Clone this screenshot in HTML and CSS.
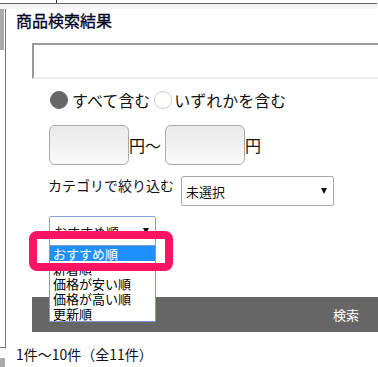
FILE: index.html
```html
<!DOCTYPE html>
<html lang="ja">
<head>
<meta charset="utf-8">
<link rel="stylesheet" href="styles.css">
</head>
<body>
<div class="page">
  <div class="topstrip"><span class="tick"></span></div>
  <div class="topline"></div>
  <div class="band"></div>
  <div class="main">
    <div class="side">
      <div class="side-box"><div class="side-thumb"></div></div>
      <div class="side-block"></div>
    </div>
    <div class="content">
      <h1 class="title">商品検索結果</h1>
      <div class="keyword"></div>
      <div class="radios">
        <span class="radio on"></span><span class="rlabel first">すべて含む</span>
        <span class="radio"></span><span class="rlabel">いずれかを含む</span>
      </div>
      <div class="price">
        <span class="pbox"></span><span class="unit">円〜</span>
        <span class="pbox"></span><span class="unit">円</span>
      </div>
      <div class="category">
        <span class="clabel">カテゴリで絞り込む</span>
        <div class="select cat"><span>未選択</span><i class="arrow"></i></div>
      </div>
      <div class="sortwrap">
        <div class="select sort"><span>おすすめ順</span><i class="arrow"></i></div>
        <ul class="options">
          <li class="hl">おすすめ順</li>
          <li>新着順</li>
          <li>価格が安い順</li>
          <li>価格が高い順</li>
          <li>更新順</li>
        </ul>
        <div class="mark"></div>
      </div>
      <div class="searchbar"><span>検索</span></div>
      <p class="count">1件〜10件（全11件）</p>
    </div>
  </div>
</div>
</body>
</html>
```
FILE: styles.css
```css
html, body {
  margin: 0;
  padding: 0;
  background: #fff;
  overflow: hidden;
}
body {
  width: 378px;
  height: 367px;
  font-family: "Noto Sans CJK JP", "Noto Sans", sans-serif;
  color: #111;
}
.page {
  display: flex;
  flex-direction: column;
}
.topstrip {
  height: 3px;
}
.tick {
  display: block;
  margin-left: 56px;
  width: 1px;
  height: 3px;
  background: #333;
}
.topline {
  width: 377px;
  height: 1px;
  background: #666;
}
.band {
  width: 377px;
  height: 5px;
  background: #f3f3f3;
}
.main {
  display: flex;
}
.side {
  width: 6px;
  flex: none;
  display: flex;
  flex-direction: column;
}
.side-box {
  width: 5px;
  height: 338px;
  border-right: 1px solid #777;
  border-bottom: 1px solid #777;
}
.side-thumb {
  width: 4px;
  height: 41px;
  background: #aaa;
}
.side-block {
  margin-top: 10px;
  width: 5px;
  height: 9px;
  background: #aaa;
}
.content {
  flex: 1;
  min-width: 0;
  padding-left: 10px;
  display: flex;
  flex-direction: column;
}
.title {
  margin: 1px 0 0;
  font-size: 16px;
  line-height: 20px;
  font-weight: normal;
  color: #000026;
  -webkit-text-stroke: 0.3px #000026;
}
.keyword {
  margin: 13px 0 0 16px;
  height: 32px;
  border-top: 2px solid #9a9a9a;
  border-left: 2px solid #9a9a9a;
  border-bottom: 2px solid #ececec;
  flex: none;
}
.radios {
  margin: 11px 0 0 34px;
  display: flex;
  align-items: center;
  height: 20px;
}
.radio {
  width: 18px;
  height: 18px;
  border-radius: 50%;
  box-sizing: border-box;
  border: 1px solid #cfcfcf;
  background: #fff;
}
.radio.on {
  background: #666;
  border-color: #666;
}
.rlabel {
  font-size: 16px;
  line-height: 20px;
  margin-left: 2px;
}
.rlabel.first {
  margin-left: 4px;
  margin-right: 4px;
}
.price {
  margin: 15px 0 0 33px;
  display: flex;
  align-items: center;
}
.pbox {
  width: 80px;
  height: 40px;
  box-sizing: border-box;
  border: 1px solid #aaa;
  border-radius: 6px;
  background: linear-gradient(to bottom, #e9e9e9, #fbfbfb);
}
.unit {
  font-size: 16px;
  line-height: 20px;
  margin-right: 4px;
}
.category {
  margin: 11px 0 0 32px;
  display: flex;
  align-items: flex-start;
}
.clabel {
  font-size: 14px;
  line-height: 20px;
  margin-top: -1px;
  margin-right: 7px;
}
.select {
  box-sizing: border-box;
  height: 30px;
  border: 1px solid #aaa;
  border-radius: 2px;
  display: flex;
  align-items: center;
  justify-content: space-between;
  padding: 0 6px 0 4px;
  font-size: 13px;
  background: #fff;
}
.select.cat {
  width: 153px;
}
.arrow {
  width: 0;
  height: 0;
  border-left: 3px solid transparent;
  border-right: 3px solid transparent;
  border-top: 6px solid #111;
}
.sortwrap {
  margin: 10px 0 0 33px;
  position: relative;
  width: 107px;
}
.select.sort {
  width: 107px;
  border-color: #7ea6dc;
  padding-right: 6px;
}
.options {
  position: absolute;
  left: 0;
  top: 29px;
  width: 107px;
  box-sizing: border-box;
  margin: 0;
  padding: 0;
  list-style: none;
  border: 1px solid #7f9bc4;
  background: #fff;
  z-index: 2;
}
.options li {
  font-size: 13px;
  line-height: 15px;
  padding-left: 3px;
  color: #000;
}
.options li.hl {
  background: #1e90ff;
  color: #fff;
}
.mark {
  position: absolute;
  left: -20px;
  top: 15px;
  width: 144px;
  height: 40px;
  box-sizing: border-box;
  border: 8px solid #ff1464;
  border-radius: 8px;
  z-index: 3;
}
.searchbar {
  margin: 51px 0 0 16px;
  height: 35px;
  background: #666;
  display: flex;
  align-items: center;
  justify-content: flex-end;
  padding-right: 19px;
  color: #fff;
  font-size: 13px;
}
.count {
  margin: 13px 0 0;
  font-size: 14px;
  line-height: 18px;
  color: #111;
}
```
